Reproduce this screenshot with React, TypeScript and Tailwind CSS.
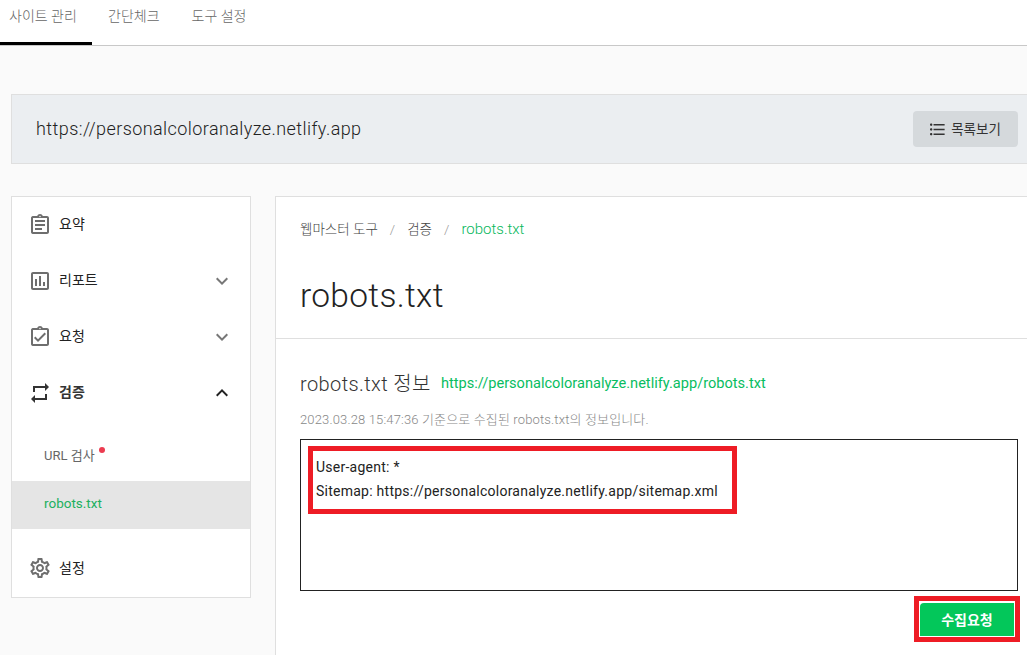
import type { ReactNode } from 'react';
import {
  MdExpandLess,
  MdExpandMore,
  MdFormatListBulleted,
  MdOutlineAssessment,
  MdOutlineAssignment,
  MdOutlineAssignmentTurnedIn,
  MdOutlineSettings,
  MdRepeat,
} from 'react-icons/md';

const fontStack = "font-['Roboto','Noto_Sans_CJK_KR',sans-serif]";

function MenuRow({ icon, label, open, active, last }: { icon: ReactNode; label: string; open?: boolean; active?: boolean; last?: boolean }) {
  return (
    <div className="flex h-14 items-center pl-4 pr-[16px]">
      <span className={`flex w-[31px] ${active ? 'text-[#333]' : 'text-[#6e6e6e]'}`}>{icon}</span>
      <span className={`text-sm ${last ? '' : '-mt-[2px]'} ${active ? 'font-bold text-[#333]' : 'text-[#222]'}`}>{label}</span>
      {open !== undefined && (
        <span className={`ml-auto ${active ? 'text-[#222]' : 'text-[#777]'}`}>
          {open ? <MdExpandLess size={24} /> : <MdExpandMore size={24} />}
        </span>
      )}
    </div>
  );
}

export default function App() {
  return (
    <div className={`h-[655px] w-[1027px] overflow-hidden bg-[#fafafa] ${fontStack}`}>
      {/* top tabs */}
      <nav className="flex h-[46px] border-b border-[#c8c8c8] bg-white text-sm font-light text-[#666]">
        <div className="h-[45px] w-[92px] border-b-[3px] border-black pl-[9px] pt-[6px]">사이트 관리</div>
        <div className="pl-4 pt-[6px]">간단체크</div>
        <div className="pl-8 pt-[6px]">도구 설정</div>
      </nav>

      <div className="pl-[11px] pt-12">
        {/* site bar */}
        <div className="-mr-2 flex h-[70px] items-center justify-between border border-[#dfdfdf] bg-[#ebeef1] pl-6 pr-4">
          <span className="-mt-px text-lg font-light tracking-[0.42px] text-[#222]">https://personalcoloranalyze.netlify.app</span>
          <button className="flex h-9 w-[105px] items-center justify-center gap-1 rounded bg-[#d5d9dc] pr-[2px] text-[13.5px] text-[#333]">
            <MdFormatListBulleted size={19} />
            목록보기
          </button>
        </div>

        <div className="mt-8 flex items-start gap-6">
          {/* sidebar */}
          <aside className="w-[240px] shrink-0 border border-[#dfdfdf] bg-white">
            <MenuRow icon={<MdOutlineAssignment size={24} />} label="요약" />
            <MenuRow icon={<MdOutlineAssessment size={24} />} label="리포트" open={false} />
            <MenuRow icon={<MdOutlineAssignmentTurnedIn size={24} />} label="요청" open={false} />
            <MenuRow icon={<MdRepeat size={24} />} label="검증" open active />
            <div className="relative mt-3 flex h-12 items-center pb-[2px] pl-8 text-[13px] text-[#666]">
              URL 검사
              <span className="absolute left-[87px] top-[14px] h-[6px] w-[6px] rounded-full bg-[#ec3b50]" />
            </div>
            <div className="flex h-12 items-center bg-[#e5e5e5] pb-1 pl-8 text-[13.5px] text-[#20b060]">robots.txt</div>
            <div className="mt-[11px] pb-px">
              <MenuRow icon={<MdOutlineSettings size={24} />} label="설정" last />
            </div>
          </aside>

          {/* main panel */}
          <main className="h-[480px] w-[800px] shrink-0 border border-[#dfdfdf] bg-white">
            <div className="h-[142px] border-b border-[#dfdfdf] px-6 pt-[21px]">
              <div className="flex items-center text-[13.5px] font-light text-[#444]">
                <span>웹마스터 도구</span>
                <span className="mx-3 text-[#999]">/</span>
                <span>검증</span>
                <span className="mx-3 text-[#999]">/</span>
                <span className="text-[15px] text-[#06b75c]">robots.txt</span>
              </div>
              <h1 className="mt-[33px] text-[33.5px] font-light leading-[44px] tracking-[0.3px] text-[#222]">robots.txt</h1>
            </div>

            <div className="relative pl-6 pt-[31px]">
              <div className="flex items-center">
                <h2 className="text-[20px] font-light leading-[28px] tracking-[0.4px] text-[#333]">robots.txt 정보</h2>
                <span className="ml-[10px] text-[14.6px] text-[#08bd61]">https://personalcoloranalyze.netlify.app/robots.txt</span>
              </div>
              <p className="mt-[12px] text-[13px] leading-[20px] font-light tracking-[0.15px] text-[#888]">
                2023.03.28 15:47:36 기준으로 수집된 robots.txt의 정보입니다.
              </p>
              <div className="relative mt-[9px] h-[152px] w-[718px] border border-[#222] px-[15px] pt-[15px] text-sm leading-[24px] tracking-[0.25px] text-[#222]">
                User-agent: *
                <br />
                Sitemap: https://personalcoloranalyze.netlify.app/sitemap.xml
                {/* red annotation over the text */}
                <div className="absolute left-[7px] top-[6px] h-[68px] w-[429px] border-[5px] border-[#ee1c25]" />
              </div>
              <div className="relative ml-[620px] mt-3 flex h-[33px] w-[94px] items-center justify-center rounded-tl bg-[#03c75a] text-sm font-bold text-white">
                수집요청
                <div className="absolute -left-[6px] -top-[7px] h-[46px] w-[106px] border-[5px] border-[#ee1c25]" />
              </div>
            </div>
          </main>
        </div>
      </div>
    </div>
  );
}
